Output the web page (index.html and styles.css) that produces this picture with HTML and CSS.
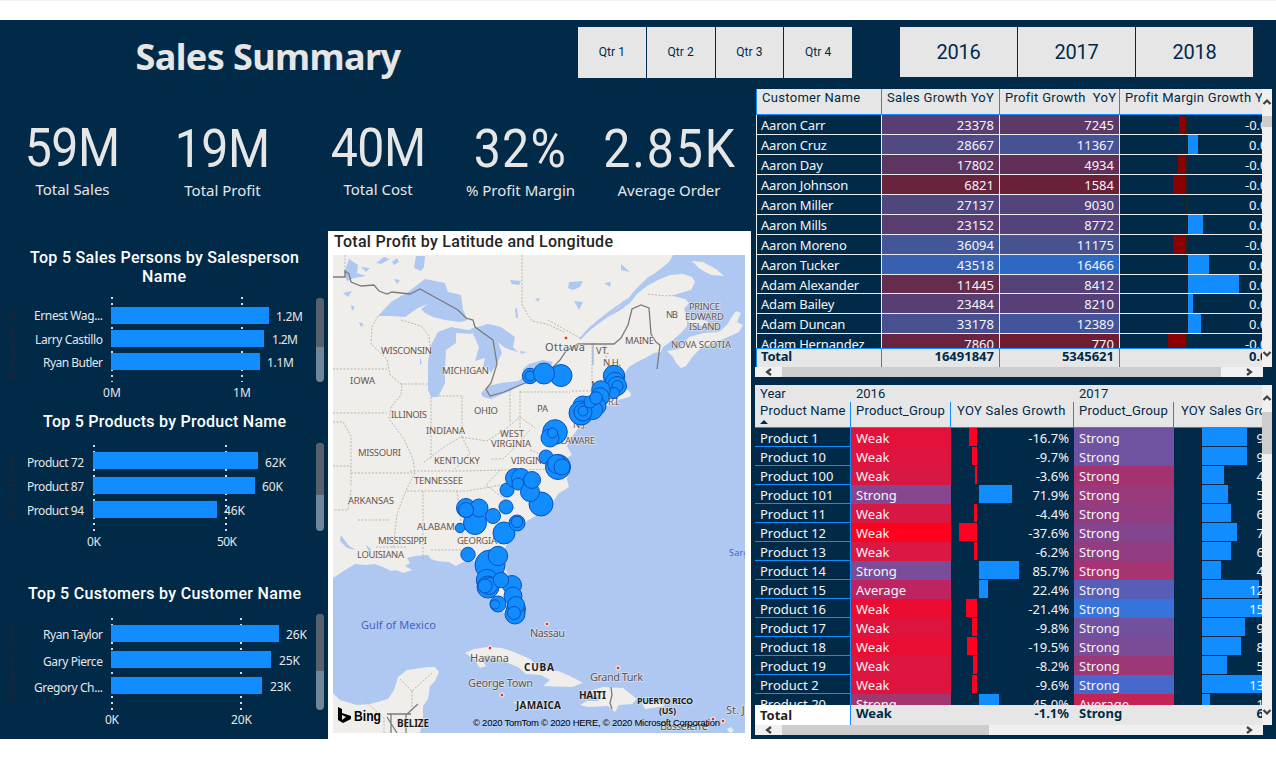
FILE: index.html
```html
<!DOCTYPE html>
<html lang="en">
<head>
<meta charset="utf-8">
<title>Sales Summary</title>
<link rel="stylesheet" href="styles.css">
</head>
<body>
<main class="dashboard">
  <header class="top">
    <h1>Sales Summary</h1>
    <div class="slicer quarters"><button>Qtr 1</button><button>Qtr 2</button><button>Qtr 3</button><button>Qtr 4</button></div>
    <div class="slicer years"><button>2016</button><button>2017</button><button>2018</button></div>
  </header>
  <div class="body">
    <div class="left">
      <section class="kpis">
        <div class="kpi"><b>59M</b><span>Total Sales</span></div>
        <div class="kpi low"><b>19M</b><span>Total Profit</span></div>
        <div class="kpi"><b>40M</b><span>Total Cost</span></div>
        <div class="kpi low pct"><b>32%</b><span>% Profit Margin</span></div>
        <div class="kpi low wide"><b>2.85K</b><span>Average Order</span></div>
      </section>
      <div class="visuals">
        <div class="charts">
          <svg class="chart" width="328" height="171" viewBox="0 231 328 171">
            <g class="c-title"><text x="30" y="263" textLength="269">Top 5 Sales Persons by Salesperson</text><text x="142" y="282" textLength="44">Name</text></g>
            <text class="c-side" transform="translate(15 381) rotate(-90)" textLength="76">Salesperson Na...</text>
            <path class="c-grid" d="M112 297V382M242 297V382"/>
            <g class="c-bar"><rect x="111" y="307" width="158" height="17"/><rect x="111" y="330" width="153" height="17"/><rect x="111" y="353" width="149" height="17"/></g>
            <g class="c-label"><text x="34" y="320" textLength="69">Ernest Wag...</text><text x="35" y="344" textLength="68">Larry Castillo</text><text x="43" y="367" textLength="60">Ryan Butler</text></g>
            <g class="c-label"><text x="276" y="321" textLength="27">1.2M</text><text x="272" y="344" textLength="26">1.2M</text><text x="267" y="367" textLength="27">1.1M</text><text x="103" y="397" textLength="18">0M</text><text x="233" y="397" textLength="18">1M</text></g>
            <rect class="c-track" x="316" y="298" width="8" height="84" rx="4"/><path class="c-thumb" d="M316 347V302a4 4 0 0 1 8 0V347z"/>
          </svg>
          <svg class="chart" width="328" height="158" viewBox="0 402 328 158">
            <g class="c-title"><text x="43" y="427" textLength="243">Top 5 Products by Product Name</text></g>
            <text class="c-side" transform="translate(15 520) rotate(-90)" textLength="66">Product Name</text>
            <path class="c-grid" d="M94 445V531M226 445V531"/>
            <g class="c-bar"><rect x="93" y="452" width="165" height="17"/><rect x="93" y="477" width="162" height="17"/><rect x="93" y="501" width="124" height="17"/></g>
            <g class="c-label"><text x="27" y="467" textLength="57">Product 72</text><text x="27" y="491" textLength="57">Product 87</text><text x="27" y="515" textLength="57">Product 94</text></g>
            <g class="c-label"><text x="265" y="467" textLength="21">62K</text><text x="262" y="491" textLength="21">60K</text><text x="224" y="515" textLength="21">46K</text><text x="87" y="546" textLength="14">0K</text><text x="217" y="546" textLength="20">50K</text></g>
            <rect class="c-track" x="316" y="443" width="8" height="88" rx="4"/><path class="c-thumb" d="M316 495V447a4 4 0 0 1 8 0V495z"/>
          </svg>
          <svg class="chart" width="328" height="179" viewBox="0 560 328 179">
            <g class="c-title"><text x="28" y="599" textLength="273">Top 5 Customers by Customer Name</text></g>
            <text class="c-side" transform="translate(15 702) rotate(-90)" textLength="79">Customer Name</text>
            <path class="c-grid" d="M112 618V710M241 618V710"/>
            <g class="c-bar"><rect x="111" y="625" width="168" height="17"/><rect x="111" y="651" width="160" height="17"/><rect x="111" y="677" width="151" height="17"/></g>
            <g class="c-label"><text x="43" y="639" textLength="60">Ryan Taylor</text><text x="43" y="666" textLength="60">Gary Pierce</text><text x="34" y="692" textLength="69">Gregory Ch...</text></g>
            <g class="c-label"><text x="286" y="639" textLength="21">26K</text><text x="279" y="665" textLength="21">25K</text><text x="270" y="691" textLength="21">23K</text><text x="105" y="724" textLength="14">0K</text><text x="231" y="724" textLength="21">20K</text></g>
            <rect class="c-track" x="316" y="614" width="8" height="96" rx="4"/><path class="c-thumb" d="M316 671V618a4 4 0 0 1 8 0V671z"/>
          </svg>
        </div>
        <svg class="map" width="423" height="508" viewBox="328 231 423 508">
          <defs><clipPath id="frame"><rect x="333" y="255" width="412" height="478"/></clipPath></defs>
          <text class="m-title" x="334" y="247" textLength="279">Total Profit by Latitude and Longitude</text>
          <g clip-path="url(#frame)">
            <rect class="water" x="333" y="255" width="412" height="478"/>
            <g class="land">
              <path d="M333 255H673L669 262 663 267 655 273 647 278 640 285 634 291 628 299 618 308 607 314 598 320 590 328 584 337 588 332 598 324 608 317 619 311 630 303 637 294 647 286 658 280 670 275 683 274 692 277 695 282 691 290 680 293 673 296 685 299 689 303 684 309 687 316 687 326 681 333 674 339 667 344 663 347 661 352 654 353 647 357 637 362 629 367 625 373 621 378 623 386 630 392 629 397 618 400 607 406 595 413 584 420 577 430 571 438 567 446 572 455 565 459 568 470 567 480 569 487 558 494 555 499 547 510 537 515 527 521 518 530 509 540 505 548 503 562 510 580 519 594 524 605 521 620 511 623 504 613 499 604 493 597 492 583 485 577 484 567 474 561 463 562 456 566 449 562 437 561 431 559 428 555 415 556 407 558 410 563 405 566 412 570 403 573 396 570 391 571 383 567 375 564 366 565 355 564 345 570 333 578z"/>
              <path d="M667 351 679 349 689 337 704 333 719 332 727 325 733 315 736 311 741 313 737 322 743 325 739 332 728 337 714 343 701 348 693 356 686 366 681 368 676 363 673 357z"/>
              <path d="M692 261 703 262 716 269 724 276 711 275 700 269zM687 319 698 319 709 322 702 326 690 324zM619 396l8-1 3-3 1 4-9 3z"/>
              <path d="M333 693 340 700 357 705 370 704 388 699 394 690 398 677 407 670 428 667 435 667 439 672 435 681 430 686 428 699 423 706 423 718 420 733H333z"/>
              <path d="M465 653 474 649 488 647 502 648 514 652 530 659 541 669 558 671 570 676 583 683 572 687 543 686 550 680 541 675 526 674 518 667 498 659 488 655 482 660 486 666 480 668 474 659z"/>
              <path d="M590 691 603 687 623 688 632 695 637 699 632 704 619 705 615 712 608 706 588 707 580 705 587 701 598 701 600 696zM642 703l18-1 5 4-20 3zM513 702l16-1 12 6-16 2zM727 729l4-2 3 4-4 2z"/>
            </g>
            <g class="water">
              <path d="M378 316 391 302 408 292 425 279 445 283 448 292 461 295 463 310 468 320 460 322 445 320 433 317 425 313 421 309 428 304 418 308 405 317 391 316z"/>
              <path d="M428 390 428 363 430 347 438 332 451 327 468 330 475 330 471 334 456 333 456 343 446 350 445 370 445 383 438 397 431 397z"/>
              <path d="M470 329 488 324 501 327 515 337 513 347 518 352 505 348 498 342 502 353 495 367 491 373 488 368 483 367 485 358 475 361 479 347 474 336z"/>
              <path d="M481 393 488 386 501 383 518 381 530 373 530 381 510 391 491 399 483 397zM522 370 529 364 543 360 553 362 548 370 535 374z"/>
              <path d="M416 256h9l-1 11-3 4-7-3zM344 273l5-14 9 6-1 8 9 3-12 2-7 3zM343 293l9-2-4 6zM351 305l4 2-3 4zM376 263l8-6 6 2-9 5zM392 262l5-4 2 4-5 3zM361 267l9 1-4 4zM394 279l6 1-3 4zM359 322l5 2-3 3zM510 280l11 1-2 4-7-1zM569 282l14-1-3 6-7 3-5-2zM604 283l7-1-1 5zM621 264l9 8-9-2zM574 301l9 1-4 8zM515 309l1 9h2l-1-10zM535 299l5-1-2 4zM520 351l7 1-6 2zM420 357l2 6-2 2z"/>
              <path d="M341 535l8 11 7 4-9-2-7-7zM366 545l5 4-2 3zM592 343h2v22h-2z"/>
            </g>
            <path class="river" d="M628 299 607 314 590 328 580 339"/>
            <path class="state" d="M345 255v22M522 255v50l10 16 15 3 17 8M378 316l-6 11-1 17 16 15 3 16 12 10-1 10-10 12-2 12 15 20 9 20 2 14-8 15-10 26-4 35M401 320l20 6 8 10 1 10M333 369h54M401 384h29M333 413h54M333 422h10l8 14v50M333 466h18M351 473h64M431 397v63M462 397v40M439 396h25M510 391v32M520 391v40M520 392h50M424 462l20-15 17-10 26 4 16-10 17-14 15 11M410 471h50l100-2M407 491h60l40-7M351 490l-3 20-15 0M358 520h32M423 491v70M457 491l7 55M431 550h30M376 547h30M500 470l-14 15 20 15 10 10M462 437l8 16-15 16M530 430l-12 14-15 15h-12M530 450l20 8M592 343v42M605 345l2 20 4 20M572 391h20l5 8M648 294l18 2 12-1M548 320l32 18M400 679l12 12 20-18M412 691v20M384 733v-15l-20-18"/>
            <path class="country" d="M333 277h12v-6l4 3 2 8 10 4 13-1 5 6 8 3 5-2 18 2 10-5 38 21 8 8 7 2 2 7 18 13 4 24-6 19-5 6 4 7 14-4 16-7 22-8 10-10M550 370l10-10 6-9 12-7h36l7-6 7-13 4-16 9-4 8 3 2 26 5 8 4 3-3 24M611 687l1 8-2 8 2 6M387 714l24 0M391 714v19M418 704l-12 11v18M387 717l10 16"/>
            <g class="region">
              <text x="381" y="354" textLength="51">WISCONSIN</text><text x="350" y="384" textLength="25">IOWA</text><text x="442" y="374" textLength="47">MICHIGAN</text><text x="391" y="418" textLength="36">ILLINOIS</text><text x="474" y="414" textLength="24">OHIO</text><text x="426" y="434" textLength="39">INDIANA</text><text x="500" y="437" textLength="24">WEST</text><text x="491" y="447" textLength="40">VIRGINIA</text><text x="358" y="456" textLength="43">MISSOURI</text><text x="434" y="464" textLength="46">KENTUCKY</text><text x="511" y="464" textLength="40">VIRGINIA</text><text x="414" y="484" textLength="49">TENNESSEE</text><text x="348" y="504" textLength="46">ARKANSAS</text><text x="417" y="530" textLength="44">ALABAMA</text><text x="378" y="544" textLength="49">MISSISSIPPI</text><text x="457" y="544" textLength="40">GEORGIA</text><text x="357" y="558" textLength="47">LOUISIANA</text><text x="537" y="412" textLength="11">PA</text><text x="549" y="444" textLength="46">DELAWARE</text><text x="573" y="428" textLength="14">N.J.</text><text x="591" y="388" textLength="18">MASS.</text><text x="608" y="405" textLength="12">R.I.</text><text x="596" y="354" textLength="13">VT.</text><text x="603" y="366" textLength="18">N.H.</text><text x="625" y="344" textLength="29">MAINE</text><text x="666" y="318" textLength="12">NB</text><text x="689" y="310" textLength="31">PRINCE</text><text x="685" y="320" textLength="39">EDWARD</text><text x="689" y="330" textLength="32">ISLAND</text><text x="671" y="348" textLength="60">NOVA SCOTIA</text>
            </g>
            <g class="city"><text x="545" y="351" textLength="40">Ottawa</text><text x="530" y="637" textLength="35">Nassau</text><text x="470" y="662" textLength="39">Havana</text><text x="468" y="687" textLength="65">George Town</text><text x="590" y="681" textLength="53">Grand Turk</text><text x="726" y="714" textLength="46">St. John's</text><text x="660" y="730" textLength="48">Basseterre</text></g>
            <g class="nation"><text x="524" y="671" textLength="30">CUBA</text><text x="516" y="709" textLength="45">JAMAICA</text><text x="579" y="699" textLength="27">HAITI</text><text class="sm" x="637" y="704" textLength="56">PUERTO RICO</text><text class="sm" x="659" y="714" textLength="17">(US)</text><text x="397" y="727" textLength="32">BELIZE</text></g>
            <g class="sea"><text x="361" y="629" textLength="75">Gulf of Mexico</text><text class="sm" x="729" y="556" textLength="58">Sargasso Sea</text></g>
            <g class="dot"><circle cx="566" cy="338" r="2"/><circle cx="490" cy="648" r="2"/><circle cx="502" cy="695" r="2"/><circle cx="547" cy="624" r="2"/><circle cx="618" cy="668" r="2"/><circle cx="713" cy="719" r="2"/><circle cx="723" cy="721" r="2"/></g>
            <g class="bubble">
              <circle cx="530" cy="376" r="7.7"/><circle cx="530" cy="376" r="5"/><circle cx="561" cy="375.500" r="11"/><circle cx="544" cy="373.500" r="10.500"/>
              <circle cx="614" cy="376" r="10.700"/><circle cx="615" cy="382" r="9.700"/><circle cx="617" cy="386" r="9.500"/><circle cx="617.500" cy="386" r="5.500"/><circle cx="614" cy="393" r="5.500"/>
              <circle cx="601" cy="390" r="9.300"/><circle cx="600" cy="397" r="9.300"/><circle cx="583" cy="406" r="10"/><circle cx="581" cy="413" r="12"/><circle cx="597" cy="406" r="9"/><circle cx="593" cy="410" r="9.500"/><circle cx="583" cy="412" r="9"/><circle cx="583" cy="411" r="5"/><circle cx="590" cy="402" r="6"/><circle cx="596" cy="398" r="6.300"/>
              <circle cx="555" cy="432" r="12.300"/><circle cx="550" cy="438" r="9"/><circle cx="552.500" cy="433" r="5"/><circle cx="546" cy="457" r="7"/><circle cx="558" cy="467" r="12.500"/><circle cx="557" cy="464" r="9.500"/><circle cx="562" cy="467" r="8"/>
              <circle cx="507" cy="490" r="7"/><circle cx="515" cy="478" r="9.500"/><circle cx="521" cy="478" r="9.500"/><circle cx="518" cy="484" r="6"/><circle cx="541" cy="504" r="12"/><circle cx="530" cy="492" r="9.500"/><circle cx="532" cy="480" r="8.500"/>
              <circle cx="506" cy="507" r="7"/><circle cx="475" cy="523" r="11.500"/><circle cx="466" cy="508" r="9.500"/><circle cx="479" cy="508" r="9"/><circle cx="466" cy="510" r="7.500"/><circle cx="460" cy="528" r="4.700"/><circle cx="493" cy="516" r="7.500"/><circle cx="504" cy="533" r="11"/><circle cx="517" cy="523" r="8"/><circle cx="517" cy="522" r="5.700"/>
              <circle cx="468" cy="554.500" r="7.200"/><circle cx="490" cy="565" r="15"/><circle cx="498" cy="556" r="9.700"/><circle cx="487" cy="580" r="10.700"/><circle cx="488" cy="587" r="11"/><circle cx="489" cy="586" r="8.500"/><circle cx="485" cy="586" r="7"/><circle cx="512" cy="585" r="9.500"/><circle cx="501" cy="580" r="7.700"/><circle cx="513" cy="596" r="9"/><circle cx="498" cy="604" r="8"/><circle cx="495" cy="604.500" r="4.700"/><circle cx="516" cy="609" r="9.500"/><circle cx="515" cy="614" r="10"/><circle cx="516" cy="605" r="8.500"/><circle cx="514" cy="613" r="6.500"/>
            </g>
            <path class="bing" fill-rule="evenodd" d="M338 707l4 2v4l9 3v3l-8 4-5-3zM342 715v5l4-3z"/>
            <text class="bing-t" x="354" y="720.500" textLength="27" lengthAdjust="spacingAndGlyphs">Bing</text>
            <text class="credit" x="473" y="726" textLength="247">© 2020 TomTom © 2020 HERE, © 2020 Microsoft Corporation</text>
          </g>
        </svg>
      </div>
    </div>
    <div class="right">
      <section class="panel growth">
        <div class="view">
          <div class="row head"><span>Customer Name</span><span>Sales Growth YoY</span><span>Profit Growth&nbsp; YoY</span><span>Profit Margin Growth YoY</span></div>
          <div class="rows">
            <div class="row"><span>Aaron Carr</span><span style="background:#583e73">23378</span><span style="background:#5c3a68">7245</span><span><i class="neg" style="width:7px"></i>-0.0</span></div>
            <div class="row"><span>Aaron Cruz</span><span style="background:#504984">28667</span><span style="background:#465294">11367</span><span><i style="width:10px"></i>0.0</span></div>
            <div class="row"><span>Aaron Day</span><span style="background:#5e3460">17802</span><span style="background:#622f58">4934</span><span><i class="neg" style="width:8px"></i>-0.0</span></div>
            <div class="row"><span>Aaron Johnson</span><span style="background:#6a233d">6821</span><span style="background:#6b203a">1584</span><span><i class="neg" style="width:13px"></i>-0.0</span></div>
            <div class="row"><span>Aaron Miller</span><span style="background:#50467e">27137</span><span style="background:#54447c">9030</span><span>0.0</span></div>
            <div class="row"><span>Aaron Mills</span><span style="background:#5a3d70">23152</span><span style="background:#54437a">8772</span><span><i style="width:15px"></i>0.0</span></div>
            <div class="row"><span>Aaron Moreno</span><span style="background:#435698">36094</span><span style="background:#48528f">11175</span><span><i class="neg" style="width:13px"></i>-0.0</span></div>
            <div class="row"><span>Aaron Tucker</span><span style="background:#3860b0">43518</span><span style="background:#2e68c2">16466</span><span><i style="width:21px"></i>0.0</span></div>
            <div class="row"><span>Adam Alexander</span><span style="background:#652c4e">11445</span><span style="background:#544278">8412</span><span><i style="width:51px"></i>0.0</span></div>
            <div class="row"><span>Adam Bailey</span><span style="background:#573f73">23484</span><span style="background:#564077">8210</span><span><i style="width:5px"></i>0.0</span></div>
            <div class="row"><span>Adam Duncan</span><span style="background:#475190">33178</span><span style="background:#44549a">12389</span><span><i style="width:13px"></i>0.0</span></div>
            <div class="row"><span>Adam Hernandez</span><span style="background:#69253f">7860</span><span style="background:#6f1c30">770</span><span><i class="neg" style="width:18px"></i>-0.0</span></div>
          </div>
          <div class="row total"><span>Total</span><span>16491847</span><span>5345621</span><span>0.0</span></div>
        </div>
        <div class="vbar"><svg width="10" height="10" viewBox="0 0 10 10"><path d="M1.500 7 5 3.500 8.500 7"/></svg><i></i><svg width="10" height="10" viewBox="0 0 10 10"><path d="M1.500 3 5 6.500 8.500 3"/></svg></div>
        <div class="hbar"><svg width="27" height="10" viewBox="0 0 27 10"><path d="M16 2 12 5 16 8"/></svg><i></i><svg width="27" height="10" viewBox="0 0 27 10"><path d="M11 2 15 5 11 8"/></svg></div>
      </section>
      <section class="panel products">
        <div class="view">
          <div class="row year"><span>Year</span><span>2016</span><span></span><span>2017</span><span></span></div>
          <div class="row head"><span>Product Name<em></em></span><span>Product_Group</span><span>YOY Sales Growth</span><span>Product_Group</span><span>YOY Sales Growth</span></div>
          <div class="rows">
            <div class="row"><span>Product 1</span><span style="background:#e4113a">Weak</span><span><i class="neg" style="width:8px"></i>-16.7%</span><span style="background:#7052a2">Strong</span><span><i style="width:45px"></i>9</span></div>
            <div class="row"><span>Product 10</span><span style="background:#df153f">Weak</span><span><i class="neg" style="width:5px"></i>-9.7%</span><span style="background:#7052a2">Strong</span><span><i style="width:45px"></i>9</span></div>
            <div class="row"><span>Product 100</span><span style="background:#d81842">Weak</span><span><i class="neg" style="width:2px"></i>-3.6%</span><span style="background:#a43270">Strong</span><span><i style="width:22px"></i>4</span></div>
            <div class="row"><span>Product 101</span><span style="background:#864690">Strong</span><span><i style="width:33px"></i>71.9%</span><span style="background:#983a7c">Strong</span><span><i style="width:26px"></i>5</span></div>
            <div class="row"><span>Product 11</span><span style="background:#d81843">Weak</span><span><i class="neg" style="width:3px"></i>-4.4%</span><span style="background:#923d82">Strong</span><span><i style="width:29px"></i>6</span></div>
            <div class="row"><span>Product 12</span><span style="background:#ff001f">Weak</span><span><i class="neg" style="width:18px"></i>-37.6%</span><span style="background:#83468e">Strong</span><span><i style="width:35px"></i>7</span></div>
            <div class="row"><span>Product 13</span><span style="background:#da1843">Weak</span><span><i class="neg" style="width:3px"></i>-6.2%</span><span style="background:#923d82">Strong</span><span><i style="width:29px"></i>6</span></div>
            <div class="row"><span>Product 14</span><span style="background:#7b4c98">Strong</span><span><i style="width:40px"></i>85.7%</span><span style="background:#a63472">Strong</span><span><i style="width:19px"></i>4</span></div>
            <div class="row"><span>Product 15</span><span style="background:#bd2460">Average</span><span><i style="width:9px"></i>22.4%</span><span style="background:#585db8">Strong</span><span><i style="width:57px"></i>12</span></div>
            <div class="row"><span>Product 16</span><span style="background:#ec0c32">Weak</span><span><i class="neg" style="width:11px"></i>-21.4%</span><span style="background:#3674da">Strong</span><span><i style="width:60px"></i>15</span></div>
            <div class="row"><span>Product 17</span><span style="background:#de143e">Weak</span><span><i class="neg" style="width:5px"></i>-9.8%</span><span style="background:#7150a0">Strong</span><span><i style="width:43px"></i>9</span></div>
            <div class="row"><span>Product 18</span><span style="background:#ea0e34">Weak</span><span><i class="neg" style="width:10px"></i>-19.5%</span><span style="background:#7a4c98">Strong</span><span><i style="width:39px"></i>8</span></div>
            <div class="row"><span>Product 19</span><span style="background:#dd153f">Weak</span><span><i class="neg" style="width:4px"></i>-8.2%</span><span style="background:#9c3878">Strong</span><span><i style="width:25px"></i>5</span></div>
            <div class="row"><span>Product 2</span><span style="background:#de143e">Weak</span><span><i class="neg" style="width:5px"></i>-9.6%</span><span style="background:#4768ca">Strong</span><span><i style="width:60px"></i>13</span></div>
            <div class="row"><span>Product 20</span><span style="background:#a3366f">Strong</span><span><i style="width:20px"></i>45.0%</span><span style="background:#c52355">Average</span><span><i style="width:8px"></i>1</span></div>
          </div>
          <div class="row total"><span>Total</span><span>Weak</span><span>-1.1%</span><span>Strong</span><span>6</span></div>
        </div>
        <div class="vbar"><svg width="10" height="10" viewBox="0 0 10 10"><path d="M1.500 7 5 3.500 8.500 7"/></svg><i></i><svg width="10" height="10" viewBox="0 0 10 10"><path d="M1.500 3 5 6.500 8.500 3"/></svg></div>
        <div class="hbar"><svg width="27" height="10" viewBox="0 0 27 10"><path d="M16 2 12 5 16 8"/></svg><i></i><svg width="27" height="10" viewBox="0 0 27 10"><path d="M11 2 15 5 11 8"/></svg></div>
      </section>
    </div>
  </div>
</main>
</body>
</html>
```
FILE: styles.css
```css
:root {
  --navy: #012a49;
  --blue: #118dff;
  --grey: #e6e6e6;
  --din: Roboto, "Liberation Sans", sans-serif;
  --ui: "Noto Sans", "Open Sans", sans-serif;
}
* { box-sizing: border-box; }
body {
  margin: 0;
  height: 757px;
  padding-top: 19px;
  border-top: 1px solid #f2f2f2;
  background: #fff;
  overflow: hidden;
  font-family: var(--ui);
}
.dashboard { height: 719px; background: var(--navy); }

/* Header and slicers */
.top { display: flex; height: 69px; padding-top: 7px; }
.top h1 {
  flex: 0 0 536px;
  margin: 5px 42px 0 0;
  text-align: center;
  font-size: 36px;
  line-height: 50px;
  letter-spacing: -0.6px;
  color: var(--grey);
}
.slicer { display: flex; gap: 1px; }
.slicer button {
  flex: 1;
  border: 0;
  padding: 0;
  background: var(--grey);
  color: var(--navy);
  font-family: var(--din);
}
.quarters { width: 274px; height: 51px; margin-right: 48px; }
.quarters button { font-size: 12px; letter-spacing: 0.1px; padding-bottom: 2px; }
.years { width: 353px; height: 50px; }
.years button { font-size: 20px; letter-spacing: -0.3px; }

.body { display: grid; grid-template-columns: 751px 525px; height: 650px; }

/* KPI cards */
.kpis {
  display: grid;
  grid-template-columns: 145px 155px 156px 129px 166px;
  height: 142px;
  padding-top: 28px;
  color: var(--grey);
}
.kpi { display: flex; flex-direction: column; align-items: center; white-space: nowrap; }
.kpi.low { padding-top: 1px; }
.kpi b {
  font: 400 53px/62px var(--din);
  letter-spacing: -0.5px;
  transform: scaleX(0.91);
}
.kpi.pct b { letter-spacing: 1.5px; }
.kpi.wide b { letter-spacing: 2px; padding-left: 5px; }
.kpi span { font-size: 15px; line-height: 20px; }
.kpi.wide span { padding-left: 2px; }

.visuals { display: flex; }
.charts { display: flex; flex-direction: column; width: 328px; }
.chart, .map { display: block; flex: none; }

/* Bar charts */
.c-title { font: 500 16px var(--din); fill: #fff; }
.c-side { font: 10px var(--ui); fill: #1c2733; }
.c-grid { fill: none; stroke: #d5dce2; stroke-width: 2; stroke-dasharray: 2 4; }
.c-bar { fill: var(--blue); }
.c-label { font: 12px var(--ui); fill: var(--grey); }
.c-track { fill: #718797; }
.c-thumb { fill: #56616c; }

/* Map */
.map { background: #fff; }
.m-title { font: 500 16px var(--din); fill: #252423; }
.water { fill: #aec8f2; }
.land { fill: #f0eeea; }
.river { fill: none; stroke: #aec8f2; stroke-width: 2; }
.state { fill: none; stroke: #bcb5b0; stroke-width: 1; stroke-dasharray: 2 1.5; }
.country { fill: none; stroke: #7d7b7a; stroke-width: 1.3; }
.region { font: 9.5px var(--ui); fill: #6b5550; }
.city { font: 11px var(--ui); fill: #55575b; }
.nation { font: 700 10px var(--ui); fill: #1d1d1f; }
.nation .sm { font-size: 9px; }
.sea { font: 11px var(--ui); fill: #4463c4; }
.sea .sm { font-size: 9px; }
.region, .city, .nation { paint-order: stroke; stroke: #f0eeea; stroke-width: 1.5; stroke-opacity: 0.6; }
.dot { fill: #e5302a; stroke: #fff; stroke-width: 1; }
.bubble { fill: var(--blue); stroke: #0a52bd; stroke-width: 1; }
.bing { fill: #000; }
.bing-t { font: 700 14px "Liberation Sans", sans-serif; fill: #000; }
.credit { font: 9.5px "Liberation Sans", sans-serif; fill: #000; }

/* Tables */
.right { padding-left: 4px; }
.panel { display: grid; grid-template-columns: 507px 10px; }
.view { overflow: hidden; }
.row { display: grid; font-size: 13px; white-space: nowrap; }
.row > span { position: relative; overflow: hidden; }
.rows { overflow: hidden; color: #f3f6f8; }
.row i { position: absolute; top: 0; bottom: 1px; background: var(--blue); }
.head, .total, .year { background: var(--grey); color: var(--navy); }
.head, .year { font-family: var(--din); }

.growth { grid-template-rows: 278px 10px; margin-bottom: 8px; }
.growth .view { padding-left: 1px; }
.growth .row { grid-template-columns: 125px 118px 120px 143px; height: 19.95px; line-height: 21px; }
.growth .row > span { border-left: 1px solid #e8ecef; border-bottom: 1px solid #e8ecef; padding: 0 5px 0 4px; text-align: right; }
.growth .row > span:first-child { text-align: left; letter-spacing: -0.2px; }
.growth .row > span:last-child { padding: 0 0 0 129px; text-align: left; }
.growth .row > span:last-child:has(.neg) { padding-left: 125px; }
.growth .rows { height: 233px; }
.growth .rows .row > span:last-child::after { content: ""; position: absolute; left: 66px; top: 0; bottom: -1px; width: 2px; background: #252423; }
.growth .rows .row i { left: 68px; bottom: 0; }
.growth .rows .row .neg { left: auto; right: 76px; background: #8b0000; }
.growth .head.row { height: 26px; line-height: 17px; border-bottom: 1px solid var(--blue); }
.growth .head.row > span, .growth .head.row > span:last-child { border-left-color: var(--blue); border-bottom: 0; padding: 0 0 0 5px; text-align: left; letter-spacing: 0.3px; }
.growth .total.row { height: 19px; line-height: 15px; border-top: 1px solid var(--blue); font-weight: 700; }
.growth .total.row > span { border-left-color: var(--blue); border-bottom: 0; }

.products { grid-template-rows: 340px 10px; }
.products .row { grid-template-columns: 96px 100px 123px 100px 88px; height: 18.97px; line-height: 20px; }
.products .row > span { padding: 0 5px; }
.products .row > span:first-child { border-right: 1px solid var(--blue); border-bottom: 1px solid var(--blue); }
.products .row > span:nth-child(3) { text-align: right; }
.products .row > span:nth-child(5) { padding: 0; display: flex; justify-content: flex-end; margin-right: -2px; }
.products .rows { height: 277px; }
.products .rows .row > span:nth-child(3)::after, .products .rows .row > span:nth-child(5)::after { content: ""; position: absolute; left: 26px; top: 0; bottom: 0; width: 1px; background: #252423; }
.products .rows .row i { left: 28px; z-index: -1; }
.products .rows .row > span:nth-child(5) { z-index: 0; }
.products .rows .row > span:nth-child(3) { z-index: 0; }
.products .rows .row .neg { left: auto; right: 97px; background: #ff0020; }
.products .year.row { height: 17px; line-height: 17px; }
.products .year.row > span:first-child { border: 0; }
.products .head.row { height: 26px; line-height: 17px; border-bottom: 1px solid var(--blue); }
.products .head.row > span, .products .head.row > span:nth-child(5) { display: block; text-align: left; margin: 0; padding: 0 0 0 5px; border: 0; border-right: 1px solid var(--blue); letter-spacing: 0.2px; }
.products .head.row > span:nth-child(3) { padding-left: 6px; letter-spacing: 0.3px; }
.products .head.row > span:nth-child(5) { border: 0; padding-left: 7px; }
.head em { position: absolute; left: 5px; bottom: 3px; border: 4px solid transparent; border-top: 0; border-bottom: 4px solid var(--navy); }
.products .total.row { height: 20px; line-height: 16px; font-weight: 700; }
.products .total.row > span:first-child { background: #fff; color: #252423; border-bottom: 0; line-height: 20px; }

/* Scrollbars */
.vbar, .hbar { display: flex; background: #f0f0f0; }
.vbar svg, .hbar svg { flex: none; fill: none; stroke: #404040; stroke-width: 2.2; }
.vbar { flex-direction: column; }
.vbar svg:last-child { margin-top: auto; }
.vbar i, .hbar i { background: #cdcdcd; }
.hbar { width: 508px; grid-column: 1 / 3; }
.hbar svg:last-child { margin-left: auto; }
.growth .vbar { padding: 8px 0; }
.growth .vbar i { height: 11px; margin-top: 9px; }
.growth .hbar i { width: 439px; }
.products .vbar { padding: 8px 0; }
.products .vbar i { height: 42px; margin-top: 9px; }
.products .hbar i { width: 207px; }
```
